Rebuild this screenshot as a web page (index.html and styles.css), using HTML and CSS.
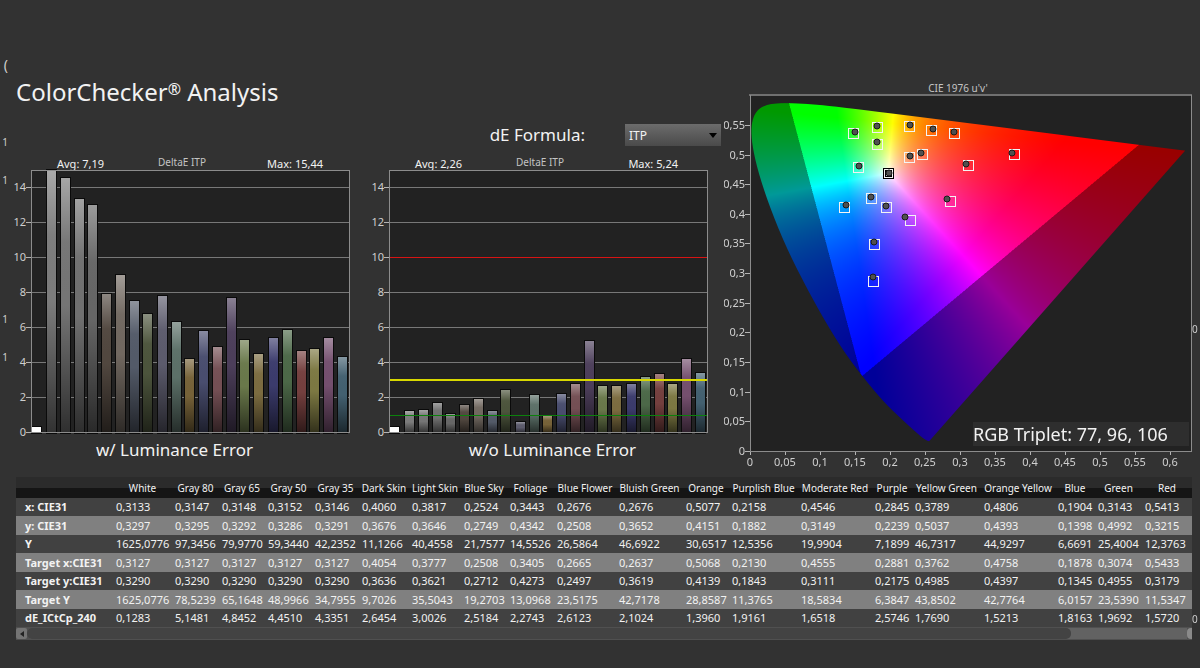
FILE: index.html
```html
<!DOCTYPE html>
<html lang="en">
<head>
<meta charset="utf-8">
<title>ColorChecker Analysis</title>
<link rel="stylesheet" href="styles.css">
</head>
<body>
<div class="page">
  <aside class="edge edge-left">
    <span class="edge-head">(</span>
    <span class="edge-a">1</span>
    <span class="edge-b">1</span>
    <span class="edge-c">1</span>
    <span class="edge-b">1</span>
  </aside>
  <main class="main">
    <div class="top">
      <section class="left">
        <h1 class="title">ColorChecker<sup class="reg">®</sup> Analysis</h1>
        <div class="formula">
          <label for="formula" class="formula-label">dE Formula:</label>
          <span class="picker">
            <select id="formula" class="select"><option>ITP</option></select>
            <svg class="caret" viewBox="0 0 8 5" aria-hidden="true"><path d="M0 0H8L4 5Z"/></svg>
          </span>
        </div>
        <div class="charts">
          <figure class="chart">
            <svg id="with-lum" class="plot" viewBox="0 0 358 284" role="img" aria-label="DeltaE ITP with luminance error"></svg>
            <figcaption class="caption caption-with">w/ Luminance Error</figcaption>
          </figure>
          <figure class="chart">
            <svg id="without-lum" class="plot" viewBox="0 0 358 284" role="img" aria-label="DeltaE ITP without luminance error"></svg>
            <figcaption class="caption caption-without">w/o Luminance Error</figcaption>
          </figure>
        </div>
      </section>
      <section class="right">
        <svg id="cie" class="plot" viewBox="0 0 468 392" role="img" aria-label="CIE 1976 u'v' diagram">
          <text class="plot-name" x="234" y="11" text-anchor="middle">CIE 1976 u'v'</text>
          <rect class="plot-bg" x="26" y="14" width="442" height="356"/>
          <foreignObject x="26" y="14" width="442" height="356"><canvas id="gamut" class="gamut" width="884" height="712"></canvas></foreignObject>
          <g id="cie-marks"></g>
          <g id="cie-axes"></g>
          <path class="frame frame-top" d="M25 14H468"/>
          <path class="frame" d="M26 14V370H467V14"/>
          <rect class="triplet-bg" x="249" y="341" width="216" height="24"/>
          <text class="triplet" x="249" y="360">RGB Triplet: 77, 96, 106</text>
        </svg>
      </section>
    </div>
    <div class="grid-wrap">
      <table class="grid">
        <colgroup id="cols"></colgroup>
        <thead id="thead"></thead>
        <tbody id="tbody"></tbody>
      </table>
      <div class="scroll">
        <button class="scroll-btn" aria-label="Scroll left"><svg class="arrow" viewBox="0 0 4 6"><path d="M4 0V6L0 3Z"/></svg></button>
        <div class="track"><div class="thumb"></div></div>
        <button class="scroll-end" aria-label="Scroll right"></button>
      </div>
    </div>
  </main>
  <aside class="edge edge-right">
    <span class="edge-d">0</span>
    <span class="edge-e">0</span>
  </aside>
</div>
<script src="app.js"></script>
</body>
</html>
```
FILE: styles.css
```css
* { box-sizing: border-box; }
body {
  margin: 0;
  background: #323232;
  color: #f2f2f2;
  font-family: "Noto Sans", "Open Sans", sans-serif;
  font-size: 11px;
}
.page {
  display: grid;
  grid-template-columns: 8px minmax(0, 1fr) 8px;
  min-height: 100vh;
}
.edge {
  display: flex;
  flex-direction: column;
  font-size: 10px;
  line-height: 14px;
  color: #cfcfcf;
}
.edge-left { padding-top: 58px; align-items: flex-end; }
.edge-right { padding-left: 0; }
.edge-head { font-size: 14px; }
.edge-a { margin-top: 63px; }
.edge-b { margin-top: 24px; }
.edge-c { margin-top: 125px; }
.edge-d { margin-top: 322px; }
.edge-e { margin-top: 276px; }

.main { padding-top: 76px; }
.top {
  display: grid;
  grid-template-columns: minmax(0, 716fr) minmax(0, 468fr);
}
.title {
  margin: 0;
  padding-left: 8px;
  font-size: 24px;
  line-height: 31px;
  font-weight: 400;
}
.reg { font-size: 16px; line-height: 1; vertical-align: 6px; }
.formula {
  display: flex;
  justify-content: flex-end;
  align-items: center;
  gap: 40px;
  margin-top: 17px;
  padding-right: 3px;
}
.formula-label { font-size: 17px; line-height: 22px; }
.picker { display: grid; width: 96px; align-items: center; }
.select {
  grid-area: 1 / 1;
  appearance: none;
  height: 22px;
  padding: 0 4px;
  border: 0;
  border-radius: 0;
  background: linear-gradient(#6c6c6c, #4a4a4a);
  color: #f2f2f2;
  font: 12px "Noto Sans", "Open Sans", sans-serif;
}
.caret {
  grid-area: 1 / 1;
  justify-self: end;
  width: 8px;
  margin-right: 4px;
  pointer-events: none;
}
.charts {
  display: grid;
  grid-template-columns: repeat(2, minmax(0, 1fr));
  margin-top: 8px;
}
.chart { margin: 0; }
.plot { display: block; width: 100%; height: auto; }
.caption {
  font-size: 17px;
  line-height: 24px;
  text-align: center;
}
.caption-with { padding-right: 25px; }
.caption-without { padding-left: 15px; }
.right { padding-top: 5px; }

.plot-bg { fill: #222; }
.frame { fill: none; stroke: #8c8c8c; stroke-width: 1; shape-rendering: crispEdges; }
.frame-top { stroke: #707070; stroke-width: 2; }
.rule { stroke: #787878; stroke-width: 1; shape-rendering: crispEdges; }
.tick { stroke: #b4b4b4; stroke-width: 1; shape-rendering: crispEdges; }
.axis { fill: #cfcfcf; font-size: 11px; }
.plot-name { fill: #c4c4c4; font-size: 10px; }
.stat { fill: #f2f2f2; font-size: 11px; }
.bar { stroke: #0a0a0a; stroke-width: 2; shape-rendering: crispEdges; }
.limit-red { fill: #d81414; }
.limit-yellow { fill: #d8d800; }
.limit-green { fill: #0c800c; }
.gamut { display: block; width: 100%; height: 100%; }
.target { fill: none; stroke: #f4f4f4; stroke-width: 1; shape-rendering: crispEdges; }
.target-white { fill: none; stroke: #000; stroke-width: 1; shape-rendering: crispEdges; }
.measured { fill: #505050; stroke: #1a1a1a; stroke-width: 1; }
.triplet-bg { fill: #2e2e2e; }
.triplet { fill: #f2f2f2; font-size: 18px; }

.grid-wrap { margin: 4px 0 0 8px; background: #424242; }
.grid {
  width: 100%;
  table-layout: fixed;
  border-collapse: collapse;
  font-size: 11px;
  line-height: 16px;
}
.grid th, .grid td { padding: 0 0 0 3px; white-space: nowrap; text-align: left; font-weight: 400; }
.grid thead th {
  height: 21px;
  padding: 0;
  font-size: 10px;
  text-align: center;
}
.grid thead { background: linear-gradient(#2b2b2b 0 50%, #151515 50% 100%); }
.grid tbody th { padding-left: 9px; font-weight: 700; }
.grid tbody tr { height: 18px; background: #414141; }
.grid tbody tr:nth-child(even) { height: 19px; background: #808080; }
.scroll {
  display: flex;
  height: 13px;
  padding: 1px 0;
  background: #505050;
}
.scroll-btn {
  display: grid;
  place-items: center;
  width: 11px;
  padding: 0;
  border: 0;
  border-radius: 2px;
  background: #747474;
}
.arrow { width: 4px; fill: #222; }
.track { flex: 1; background: #626262; border-radius: 5px 0 0 5px; }
.thumb { width: 90%; height: 100%; border-radius: 5px; background: #434343; }
.scroll-end { width: 5px; padding: 0; border: 0; border-radius: 4px 0 0 4px; background: #8a8a8a; }
```
FILE: app.js
```js
const NS = "http://www.w3.org/2000/svg";

function add(parent, tag, attrs, text) {
  const el = document.createElementNS(NS, tag);
  for (const key in attrs) el.setAttribute(key, attrs[key]);
  if (text !== undefined) el.textContent = text;
  parent.appendChild(el);
  return el;
}

/* ---- DeltaE bar charts ---- */
const barColors = ["#ffffff", "#7c7c7c", "#757575", "#707070", "#666666", "#51473f", "#716860",
  "#535a68", "#4c543c", "#5c5b6c", "#5c7068", "#766238", "#494d6e", "#744f54", "#4c3e5a",
  "#69784a", "#7c6c40", "#3b3b6c", "#4c6848", "#743f3e", "#7c7842", "#744f6e", "#436070"];
const barX = [28, 43, 57, 71, 84, 98, 112, 126, 139, 154, 168, 181, 195, 209, 223, 236, 250, 265,
  279, 293, 306, 320, 334];

function barChart(id, values, avg, max, limits) {
  const svg = document.getElementById(id);
  const y = v => Math.round(278 - v * 17.5);
  const defs = add(svg, "defs", {});
  const shade = add(defs, "linearGradient", { id: id + "-shade", x1: 0, y1: 0, x2: 0, y2: 1 });
  add(shade, "stop", { offset: 0, "stop-color": "#fff", "stop-opacity": .35 });
  add(shade, "stop", { offset: .25, "stop-color": "#fff", "stop-opacity": 0.02 });
  add(shade, "stop", { offset: .5, "stop-color": "#000", "stop-opacity": 0 });
  add(shade, "stop", { offset: 1, "stop-color": "#000", "stop-opacity": .6 });
  add(svg, "text", { class: "stat", x: 49, y: 14 }, "Avg: " + avg);
  add(svg, "text", { class: "plot-name", x: 174, y: 12, "text-anchor": "middle" }, "DeltaE ITP");
  add(svg, "text", { class: "stat", x: max.length > 4 ? 315 : 312, y: 14, "text-anchor": "end" }, "Max: " + max);
  add(svg, "rect", { class: "plot-bg", x: 23, y: 16, width: 319, height: 263 });
  for (let v = 0; v <= 14; v += 2) {
    add(svg, "text", { class: "axis", x: 18, y: y(v) + 4, "text-anchor": "end" }, v);
    add(svg, "path", { class: "tick", d: `M18 ${y(v)}.5H23` });
    const limited = limits.some(l => l[0] === v);
    if (v && !limited) add(svg, "path", { class: "rule", d: `M23 ${y(v)}.5H342` });
  }
  values.forEach((v, i) => {
    const top = Math.max(y(v), 16), box = { x: barX[i] - 4, y: top, width: 9, height: 279 - top };
    add(svg, "rect", { class: "bar", fill: barColors[i], ...box });
    add(svg, "rect", { fill: barColors[i], ...box });
    if (i) add(svg, "rect", { fill: `url(#${id}-shade)`, ...box });
  });
  limits.forEach(([v, cls, size]) => add(svg, "rect", { class: cls, x: 23, y: y(v) + 1 - size, width: 319, height: size }));
  add(svg, "path", { class: "frame", d: "M23.5 16.5H341.5V278.5H23.5Z" });
}

barChart("with-lum", [0.3, 15.4, 14.5, 13.3, 12.95, 7.9, 9, 7.5, 6.75, 7.8, 6.3, 4.15, 5.75, 4.85, 7.65, 5.25,
  4.45, 5.4, 5.85, 4.65, 4.75, 5.35, 4.3], "7,19", "15,44", []);
barChart("without-lum", [0.3, 1.2, 1.25, 1.65, 1.05, 1.55, 1.9, 1.2, 2.4, 0.6, 2.1, 0.9, 2.15, 2.75, 5.2,
  2.65, 2.65, 2.75, 3.15, 3.3, 2.75, 4.2, 3.4], "2,26", "5,24",
  [[10, "limit-red", 1], [3, "limit-yellow", 2], [1, "limit-green", 1]]);

/* ---- CIE 1976 u'v' diagram ---- */
const locus = [[.1741, .005], [.1714, .0051], [.1644, .0109], [.1566, .0177], [.144, .0297],
  [.1241, .0578], [.1096, .0868], [.0913, .1327], [.0687, .2007], [.0454, .295], [.0235, .4127],
  [.0082, .5384], [.0039, .6548], [.0139, .7502], [.0389, .812], [.0743, .8338], [.1142, .8262],
  [.1547, .8059], [.2296, .7543], [.3016, .6923], [.3731, .6245], [.5125, .4866], [.627, .3725],
  [.6915, .3083], [.7347, .2653]];

function drawGamut() {
  const canvas = document.getElementById("gamut"), ctx = canvas.getContext("2d");
  const w = canvas.width, h = canvas.height, sx = w / 442 * 698, sy = h / 356 * 593;
  const img = ctx.createImageData(w, h), px = img.data;
  const green = [.0556, .5868], red = [.5566, .5165], blue = [.1593, .1258];
  const side = (p, a, b) => (p[0] - b[0]) * (a[1] - b[1]) - (a[0] - b[0]) * (p[1] - b[1]);
  for (let j = 0; j < h; j++) {
    for (let i = 0; i < w; i++) {
      const u = i / sx, v = Math.max((h - j) / sy, .001), p = [u, v];
      const X = 9 * u / (4 * v), Z = (12 - 3 * u - 20 * v) / (4 * v);
      let c = [3.2406 * X - 1.5372 - .4986 * Z, -.9689 * X + 1.8758 + .0415 * Z, .0557 * X - .204 + 1.057 * Z];
      c = c.map(k => Math.max(k, 0));
      const m = Math.max(...c) || 1;
      const inside = side(p, red, blue) * side(green, red, blue) >= 0
        && side(p, blue, green) * side(red, blue, green) >= 0;
      const gain = inside ? 255 : 153, o = (j * w + i) * 4;
      for (let k = 0; k < 3; k++) px[o + k] = gain * c[k] / m;
      px[o + 3] = 255;
    }
  }
  ctx.putImageData(img, 0, 0);
  const pts = locus.map(([x, y]) => {
    const d = -2 * x + 12 * y + 3;
    return [4 * x / d * sx, h - 9 * y / d * sy];
  });
  ctx.globalCompositeOperation = "destination-in";
  ctx.beginPath();
  ctx.moveTo(...pts[0]);
  for (let i = 1; i < pts.length - 1; i++) {
    const a = pts[i], b = pts[i + 1];
    ctx.quadraticCurveTo(a[0], a[1], (a[0] + b[0]) / 2, (a[1] + b[1]) / 2);
  }
  ctx.lineTo(...pts[pts.length - 1]);
  ctx.closePath();
  ctx.fill();
}
drawGamut();

/* target x, target y, measured x, measured y */
const marks = [[129, 52, 131, 51], [153, 46, 153, 45], [153, 63, 153, 61], [185, 45, 186, 44],
  [207, 49, 209, 48], [230, 52, 230, 51], [185, 76, 186, 75], [198, 73, 197, 72], [134, 86, 135, 85],
  [120, 126, 122, 124], [147, 117, 147, 116], [162, 126, 162, 125], [186, 139, 181, 136],
  [150, 163, 150, 161], [226, 120, 223, 118], [244, 84, 242, 83], [290, 73, 288, 72],
  [149, 200, 149, 196]];
const markLayer = document.getElementById("cie-marks");
marks.forEach(([x, y, mx, my]) => {
  add(markLayer, "rect", { class: "target", x: x - 5, y: y - 5, width: 10, height: 10 });
  add(markLayer, "circle", { class: "measured", cx: mx, cy: my, r: 3 });
});
add(markLayer, "rect", { class: "target-white", x: 159, y: 87, width: 10, height: 10 });
add(markLayer, "rect", { class: "target", x: 160, y: 88, width: 8, height: 8 });
add(markLayer, "rect", { class: "target-white", x: 161, y: 89, width: 6, height: 6 });
add(markLayer, "circle", { class: "measured", cx: 165, cy: 92, r: 3 });

const axes = document.getElementById("cie-axes");
const label = n => String(n / 100).replace(".", ",");
for (let i = 0; i <= 12; i++) {
  const x = Math.round(26 + i * 35);
  add(axes, "path", { class: "tick", d: `M${x}.5 370V374` });
  add(axes, "text", { class: "axis", x, y: 385, "text-anchor": "middle" }, label(i * 5));
}
for (let i = 0; i <= 11; i++) {
  const y = Math.round(370 - i * 29.65);
  add(axes, "path", { class: "tick", d: `M21 ${y}.5H26` });
  add(axes, "text", { class: "axis", x: 21, y: y + 4, "text-anchor": "end" }, label(i * 5));
}

/* ---- Data table ---- */
const columns = [["", 97], ["White", 59], ["Gray 80", 47], ["Gray 65", 46], ["Gray 50", 47], ["Gray 35", 47],
  ["Dark Skin", 50], ["Light Skin", 52], ["Blue Sky", 46], ["Foliage", 47], ["Blue Flower", 62],
  ["Bluish Green", 67], ["Orange", 46], ["Purplish Blue", 69], ["Moderate Red", 74], ["Purple", 40],
  ["Yellow Green", 69], ["Orange Yellow", 74], ["Blue", 40], ["Green", 47], ["Red", 50]];
const rows = [
  ["x: CIE31", "0,3133 0,3147 0,3148 0,3152 0,3146 0,4060 0,3817 0,2524 0,3443 0,2676 0,2676 0,5077 0,2158 0,4546 0,2845 0,3789 0,4806 0,1904 0,3143 0,5413"],
  ["y: CIE31", "0,3297 0,3295 0,3292 0,3286 0,3291 0,3676 0,3646 0,2749 0,4342 0,2508 0,3652 0,4151 0,1882 0,3149 0,2239 0,5037 0,4393 0,1398 0,4992 0,3215"],
  ["Y", "1625,0776 97,3456 79,9770 59,3440 42,2352 11,1266 40,4558 21,7577 14,5526 26,5864 46,6922 30,6517 12,5356 19,9904 7,1899 46,7317 44,9297 6,6691 25,4004 12,3763"],
  ["Target x:CIE31", "0,3127 0,3127 0,3127 0,3127 0,3127 0,4054 0,3777 0,2508 0,3405 0,2665 0,2637 0,5068 0,2130 0,4555 0,2881 0,3762 0,4758 0,1878 0,3074 0,5433"],
  ["Target y:CIE31", "0,3290 0,3290 0,3290 0,3290 0,3290 0,3636 0,3621 0,2712 0,4273 0,2497 0,3619 0,4139 0,1843 0,3111 0,2175 0,4985 0,4397 0,1345 0,4955 0,3179"],
  ["Target Y", "1625,0776 78,5239 65,1648 48,9966 34,7955 9,7026 35,5043 19,2703 13,0968 23,5175 42,7178 28,8587 11,3765 18,5834 6,3847 43,8502 42,7764 6,0157 23,5390 11,5347"],
  ["dE_ICtCp_240", "0,1283 5,1481 4,8452 4,4510 4,3351 2,6454 3,0026 2,5184 2,2743 2,6123 2,1024 1,3960 1,9161 1,6518 2,5746 1,7690 1,5213 1,8163 1,9692 1,5720"]
];
const total = columns.reduce((sum, c) => sum + c[1], 0);
const head = document.getElementById("thead").insertRow();
columns.forEach(([name, width]) => {
  const col = document.createElement("col");
  col.style.width = width / total * 100 + "%";
  document.getElementById("cols").appendChild(col);
  const th = document.createElement("th");
  th.textContent = name;
  head.appendChild(th);
});
rows.forEach(([name, cells]) => {
  const tr = document.getElementById("tbody").insertRow();
  const th = document.createElement("th");
  th.scope = "row";
  th.textContent = name;
  tr.appendChild(th);
  cells.split(" ").forEach(value => { tr.insertCell().textContent = value; });
});
```
